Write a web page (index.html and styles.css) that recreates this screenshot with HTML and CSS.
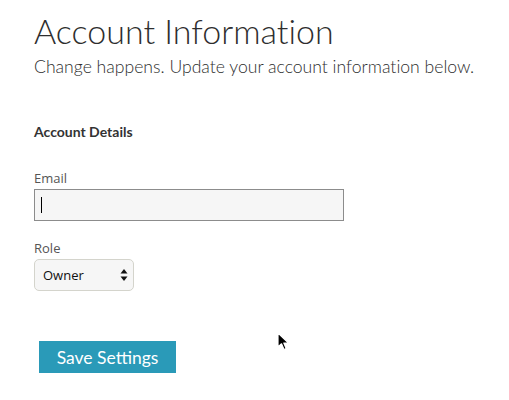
FILE: index.html
```html
<!DOCTYPE html>
<html>
<head>
<meta charset="utf-8">
<link rel="stylesheet" href="styles.css">
</head>
<body>
<main class="page">
  <h1 class="title">Account Information</h1>
  <p class="subtitle">Change happens. Update your account information below.</p>
  <h2 class="section">Account Details</h2>
  <form class="form">
    <label class="label" for="email">Email</label>
    <div class="field">
      <input class="input" id="email" type="text">
      <span class="caret"></span>
    </div>
    <label class="label label-role" for="role">Role</label>
    <div class="select-wrap">
      <select class="select" id="role">
        <option>Owner</option>
      </select>
      <svg class="arrows" width="8" height="12" viewBox="0 0 8 12">
        <path d="M4 0 L7.5 4.5 L0.5 4.5 Z" fill="#111"/>
        <path d="M4 12 L7.5 7.5 L0.5 7.5 Z" fill="#111"/>
      </svg>
    </div>
    <button class="button" type="button">Save Settings</button>
  </form>
  <svg class="cursor" width="14" height="20" viewBox="0 0 14 20">
    <path d="M1 1 L1 15 L4.5 11.8 L7 17.5 L9.2 16.5 L6.8 11 L11.5 11 Z" fill="#000" stroke="#fff" stroke-width="1.2" stroke-linejoin="round"/>
  </svg>
</main>
</body>
</html>
```
FILE: styles.css
```css
html, body {
  margin: 0;
  padding: 0;
  background: #fff;
}
.page {
  position: relative;
  width: 509px;
  height: 400px;
  padding: 11px 0 0 34px;
  box-sizing: border-box;
  font-family: Lato, "Open Sans", sans-serif;
  font-variant-ligatures: none;
  color: #333;
}
.title {
  margin: 0;
  font-weight: 300;
  font-size: 34px;
  line-height: 40px;
  color: #2e2e2e;
}
.subtitle {
  margin: 6px 0 0;
  font-weight: 300;
  font-size: 17.6px;
  line-height: 20px;
  color: #2e2e2e;
}
.section {
  margin: 46px 0 0;
  font-weight: 700;
  font-size: 14px;
  line-height: 17px;
  color: #333;
}
.form {
  display: flex;
  flex-direction: column;
  align-items: flex-start;
  margin: 29px 0 0;
}
.label {
  font-family: "Open Sans", sans-serif;
  font-size: 13px;
  line-height: 18px;
  color: #555;
  margin-bottom: 2px;
}
.label-role {
  margin-top: 18px;
}
.field {
  position: relative;
}
.input {
  display: block;
  width: 310px;
  height: 32px;
  box-sizing: border-box;
  margin: 0;
  border: 1px solid #8c8c8c;
  background: #f6f6f6;
  border-radius: 0;
  outline: none;
}
.caret {
  position: absolute;
  left: 7px;
  top: 8px;
  width: 1px;
  height: 16px;
  background: #000;
}
.select-wrap {
  position: relative;
}
.select {
  display: block;
  -webkit-appearance: none;
  appearance: none;
  width: 100px;
  height: 32px;
  box-sizing: border-box;
  margin: 0;
  padding: 0 0 0 8px;
  border: 1px solid #d4d4cc;
  border-radius: 5px;
  background: #f6f6f6;
  font-family: "Open Sans", sans-serif;
  font-size: 13px;
  color: #111;
}
.arrows {
  position: absolute;
  left: 86px;
  top: 10px;
  pointer-events: none;
}
.button {
  margin: 50px 0 0 5px;
  width: 137px;
  height: 32px;
  padding: 0;
  border: none;
  border-radius: 0;
  background: #2a9ab8;
  color: #fff;
  font-family: Lato, sans-serif;
  font-size: 17.5px;
  font-weight: 400;
}
.cursor {
  position: absolute;
  left: 277px;
  top: 332px;
}
```
